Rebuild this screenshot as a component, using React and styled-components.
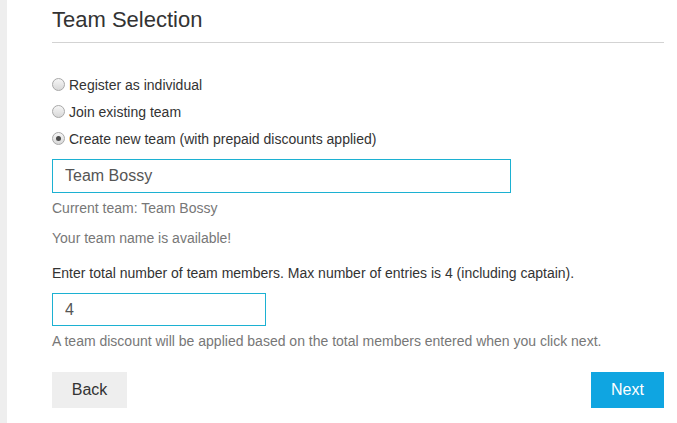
import React, { useState } from 'react';
import styled, { createGlobalStyle } from 'styled-components';

const GlobalStyle = createGlobalStyle`
  html, body {
    margin: 0;
    padding: 0;
    background: #fff;
  }
  body {
    font-family: "Liberation Sans", Arial, sans-serif;
    color: #333;
  }
`;

const Page = styled.div`
  display: flex;
  min-height: 423px;
`;

const SideStrip = styled.div`
  width: 7px;
  flex-shrink: 0;
  background: #eeeeee;
`;

const Content = styled.div`
  margin-left: 45px;
  width: 612px;
  display: flex;
  flex-direction: column;
`;

const Title = styled.h2`
  margin: 8px 0 0;
  padding-bottom: 10px;
  font-size: 22px;
  line-height: 24px;
  font-weight: 400;
  color: #333;
  border-bottom: 1px solid #d3d3d3;
`;

const Options = styled.div`
  margin-top: 32px;
  display: flex;
  flex-direction: column;
  gap: 7px;
`;

const OptionRow = styled.label`
  display: flex;
  align-items: center;
  gap: 4px;
  height: 20px;
  font-size: 14px;
  line-height: 20px;
  color: #333;
  cursor: pointer;
`;

const Radio = styled.input.attrs({ type: 'radio' })`
  appearance: none;
  margin: 0;
  width: 13px;
  height: 13px;
  border-radius: 50%;
  border: 1px solid #a8a8a8;
  background: linear-gradient(#f6f6f6, #d8d8d8);
  box-sizing: border-box;
  position: relative;
  top: -1px;

  &:checked::after {
    content: '';
    position: absolute;
    left: 3px;
    top: 3px;
    width: 5px;
    height: 5px;
    border-radius: 50%;
    background: #4a4a4a;
  }
`;

const TextField = styled.input`
  box-sizing: border-box;
  width: ${({ width }) => width};
  height: ${({ height }) => height};
  margin-top: ${({ top }) => top};
  padding: 0 12px;
  border: 1px solid #1cb1d2;
  font-family: "Liberation Sans", Arial, sans-serif;
  font-size: 16px;
  color: #555;
  outline: none;
`;

const Note = styled.p`
  margin: ${({ top }) => top} 0 0;
  font-size: 14px;
  line-height: 20px;
  color: ${({ dark }) => (dark ? '#333' : '#777')};
`;

const Actions = styled.div`
  margin-top: 21px;
  display: flex;
  justify-content: space-between;
`;

const ActionButton = styled.button`
  height: 36px;
  width: ${({ width }) => width};
  border: none;
  border-radius: 0;
  font-family: "Liberation Sans", Arial, sans-serif;
  font-size: 16px;
  background: ${({ primary }) => (primary ? '#0fa5e1' : '#eeeeee')};
  color: ${({ primary }) => (primary ? '#fff' : '#333')};
  cursor: pointer;
`;

const options = [
  { id: 'individual', label: 'Register as individual' },
  { id: 'join', label: 'Join existing team' },
  { id: 'create', label: 'Create new team (with prepaid discounts applied)' },
];

const App = () => {
  const [choice, setChoice] = useState('create');
  const [teamName, setTeamName] = useState('Team Bossy');
  const [members, setMembers] = useState('4');

  return (
    <>
      <GlobalStyle />
      <Page>
        <SideStrip />
        <Content>
          <Title>Team Selection</Title>
          <Options>
            {options.map((o) => (
              <OptionRow key={o.id}>
                <Radio
                  name="team"
                  checked={choice === o.id}
                  onChange={() => setChoice(o.id)}
                />
                {o.label}
              </OptionRow>
            ))}
          </Options>
          <TextField
            width="459px"
            height="34px"
            top="10px"
            value={teamName}
            onChange={(e) => setTeamName(e.target.value)}
          />
          <Note top="5px">Current team: {teamName}</Note>
          <Note top="10px">Your team name is available!</Note>
          <Note top="15px" dark>
            Enter total number of team members. Max number of entries is 4 (including captain).
          </Note>
          <TextField
            width="214px"
            height="33px"
            top="10px"
            value={members}
            onChange={(e) => setMembers(e.target.value)}
          />
          <Note top="5px">
            A team discount will be applied based on the total members entered when you click next.
          </Note>
          <Actions>
            <ActionButton width="75px">Back</ActionButton>
            <ActionButton width="73px" primary>Next</ActionButton>
          </Actions>
        </Content>
      </Page>
    </>
  );
};

export default App;
